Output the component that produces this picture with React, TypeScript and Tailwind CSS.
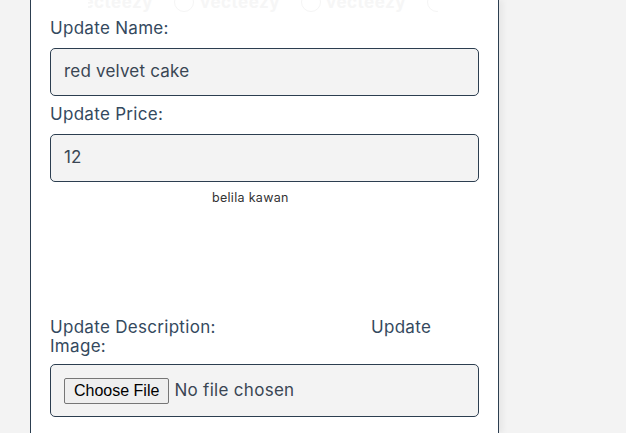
const sans = { fontFamily: 'Inter, "DejaVu Sans", sans-serif' };

function Watermark() {
  const items = [
    { circle: 47, text: 73 },
    { circle: 174, text: 200 },
    { circle: 301, text: 326 },
    { circle: 427, text: 453 },
  ];
  return (
    <div className="pointer-events-none absolute left-[57px] top-0 h-[13px] w-[350px] overflow-hidden">
      {items.map((it, i) => (
        <div key={i}>
          <div
            className="absolute top-[-8px] h-[20px] w-[20px] rounded-full border-[1.5px] border-[#f5f5f5]"
            style={{ left: it.circle - 88 }}
          />
          <div
            className="absolute top-[-10px] text-[17px] font-bold tracking-[0.5px] text-[#f6f6f6]"
            style={{ left: it.text - 88, ...sans }}
          >
            vecteezy
          </div>
        </div>
      ))}
    </div>
  );
}

export default function App() {
  return (
    <div className="h-[433px] w-full overflow-hidden bg-[#f3f3f3] pl-[30px]" style={sans}>
      <div className="relative h-[433px] w-[469px] border-x border-[#2c3e50] bg-white px-[19px] pt-[16px] shadow-[4px_0_6px_rgba(0,0,0,0.05)]">
        <Watermark />
        <div className="relative">
          <div className="text-[17px] leading-[24px] tracking-[0.3px] text-[#34495e]">Update Name:</div>
          <div className="mt-[8px] flex h-[48px] items-center rounded-[5px] border border-[#2c3e50] bg-[#f3f3f3] pl-[13px] text-[17px] tracking-[0.2px] text-[#3a4653]">
            red velvet cake
          </div>
          <div className="mt-[6px] text-[17px] leading-[24px] tracking-[0.3px] text-[#34495e]">Update Price:</div>
          <div className="mt-[8px] flex h-[48px] items-center rounded-[5px] border border-[#2c3e50] bg-[#f3f3f3] pl-[13px] text-[17px] tracking-[0.2px] text-[#3a4653]">
            12
          </div>
          <div className="mt-[8px] ml-[162px] text-[12.5px] leading-[16px] tracking-[0.3px] text-[#333]">belila kawan</div>
          <div className="mt-[112px] text-[17px] leading-[19px] tracking-[0.3px] text-[#34495e]">
            <div className="flex">
              <span className="w-[321px]">Update Description:</span>
              <span>Update</span>
            </div>
            <div>Image:</div>
          </div>
          <div className="mt-[8px] flex h-[53px] items-center rounded-[5px] border border-[#2c3e50] bg-[#f3f3f3] pl-[13px]">
            <span
              className="flex h-[26px] items-center rounded-[2px] border border-[#767676] bg-[#efefef] px-[9px] text-[16px] text-black"
              style={{ fontFamily: '"Liberation Sans", Arial, sans-serif' }}
            >
              Choose File
            </span>
            <span className="ml-[5px] text-[17px] tracking-[0.3px] text-[#3a4653]">No file chosen</span>
          </div>
        </div>
      </div>
    </div>
  );
}
